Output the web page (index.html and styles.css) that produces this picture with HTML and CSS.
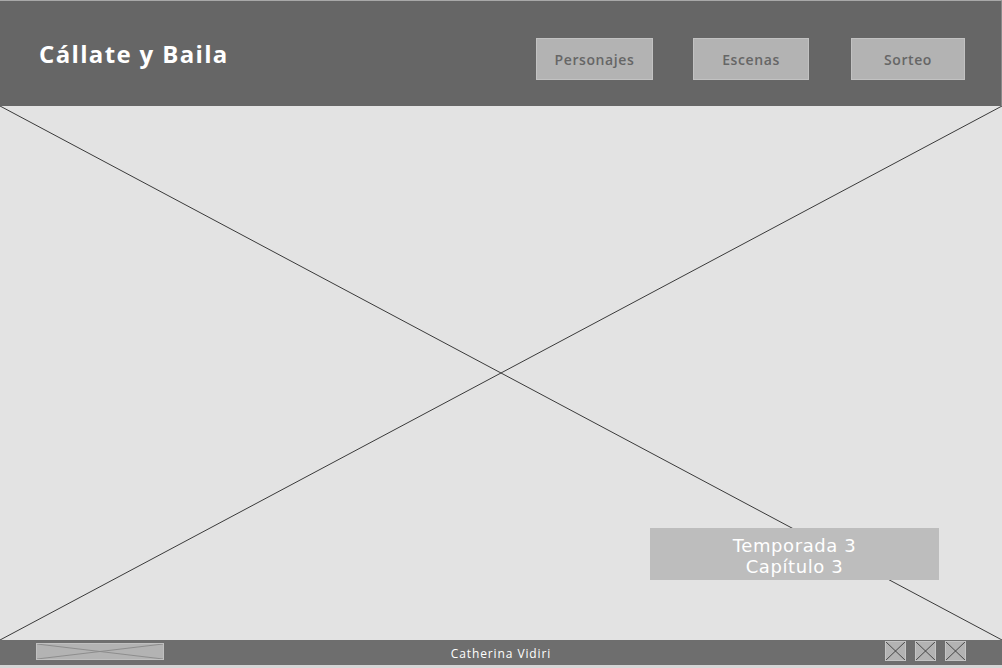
FILE: index.html
```html
<!DOCTYPE html>
<html lang="es">
<head>
<meta charset="utf-8">
<title>Cállate y Baila</title>
<link rel="stylesheet" href="styles.css">
</head>
<body>
<div class="page">
  <header class="header">
    <h1 class="brand">Cállate y Baila</h1>
    <nav class="nav">
      <a class="nav-btn nav-btn--a">Personajes</a>
      <a class="nav-btn nav-btn--b">Escenas</a>
      <a class="nav-btn nav-btn--c">Sorteo</a>
    </nav>
  </header>
  <main class="hero">
    <svg class="hero-x" viewBox="0 0 1002 534" preserveAspectRatio="none">
      <line x1="0" y1="0" x2="1002" y2="534" />
      <line x1="1002" y1="0" x2="0" y2="534" />
    </svg>
    <div class="caption">
      <span class="caption-line">Temporada 3</span>
      <span class="caption-line">Capítulo 3</span>
    </div>
  </main>
  <footer class="footer">
    <div class="footer-logo">
      <svg viewBox="0 0 128 17" preserveAspectRatio="none">
        <line x1="0" y1="0" x2="128" y2="17" />
        <line x1="128" y1="0" x2="0" y2="17" />
      </svg>
    </div>
    <span class="footer-name">Catherina Vidiri</span>
    <div class="footer-icons">
      <span class="ficon"><svg viewBox="0 0 21 20"><line x1="0" y1="0" x2="21" y2="20"/><line x1="21" y1="0" x2="0" y2="20"/></svg></span>
      <span class="ficon"><svg viewBox="0 0 21 20"><line x1="0" y1="0" x2="21" y2="20"/><line x1="21" y1="0" x2="0" y2="20"/></svg></span>
      <span class="ficon"><svg viewBox="0 0 21 20"><line x1="0" y1="0" x2="21" y2="20"/><line x1="21" y1="0" x2="0" y2="20"/></svg></span>
    </div>
  </footer>
</div>
</body>
</html>
```

FILE: styles.css
```css
* { box-sizing: border-box; }
html, body { margin: 0; padding: 0; }
body {
  width: 1002px;
  height: 668px;
  background: #e3e3e3;
  font-family: "Open Sans", "Liberation Sans", sans-serif;
  overflow: hidden;
}
.page {
  display: flex;
  flex-direction: column;
  height: 668px;
}
.header {
  height: 106px;
  flex: none;
  background: #666666;
  border-top: 1px solid #a8a8a8;
  border-right: 1px solid #8a8a8a;
  display: flex;
  align-items: flex-start;
  justify-content: space-between;
  padding: 0 36px 0 39px;
}
.brand {
  margin: 37px 0 0;
  color: #ffffff;
  font-size: 24px;
  font-weight: 700;
  letter-spacing: 1.35px;
  line-height: 32px;
}
.nav {
  display: flex;
  margin-top: 37px;
}
.nav-btn {
  height: 42px;
  display: flex;
  align-items: center;
  justify-content: center;
  background: #b3b3b3;
  border: 1px solid #c2c2c2;
  color: #666666;
  font-size: 14px;
  font-weight: 600;
  letter-spacing: 0.6px;
}
.nav-btn--a { width: 117px; }
.nav-btn--b { width: 116px; margin-left: 40px; }
.nav-btn--c { width: 114px; margin-left: 42px; }
.hero {
  position: relative;
  flex: none;
  height: 534px;
  background: #e3e3e3;
}
.hero-x {
  position: absolute;
  inset: 0;
  width: 100%;
  height: 100%;
}
.hero-x line {
  stroke: #3a3a3a;
  stroke-width: 1;
}
.caption {
  position: absolute;
  left: 650px;
  top: 422px;
  width: 289px;
  height: 52px;
  padding-top: 3px;
  background: #bdbdbd;
  color: #ffffff;
  font-family: "DejaVu Sans", "Open Sans", sans-serif;
  font-size: 18px;
  letter-spacing: 0.6px;
  display: flex;
  flex-direction: column;
  align-items: center;
  justify-content: center;
}
.caption-line {
  display: block;
  line-height: 21px;
}
.footer {
  flex: none;
  background: #6e6e6e;
  border-bottom: 3px solid #d6d6d6;
  height: 28px;
  display: flex;
  align-items: center;
  justify-content: space-between;
  padding: 0 36px 3px 36px;
  position: relative;
}
.footer-logo {
  width: 128px;
  height: 17px;
  background: #b3b3b3;
  border: 1px solid #c0c0c0;
}
.footer-logo svg { display: block; width: 100%; height: 100%; }
.footer-logo line { stroke: #8a8a8a; stroke-width: 1; }
.footer-name {
  position: absolute;
  left: 0;
  right: 0;
  top: 6px;
  text-align: center;
  color: #ffffff;
  font-size: 12px;
  letter-spacing: 0.9px;
  line-height: 16px;
}
.footer-icons {
  display: flex;
  gap: 9px;
}
.ficon {
  width: 21px;
  height: 20px;
  background: #b3b3b3;
  border: 1px solid #c4c4c4;
}
.ficon svg { display: block; width: 100%; height: 100%; }
.ficon line { stroke: #3a3a3a; stroke-width: 1; }
```
